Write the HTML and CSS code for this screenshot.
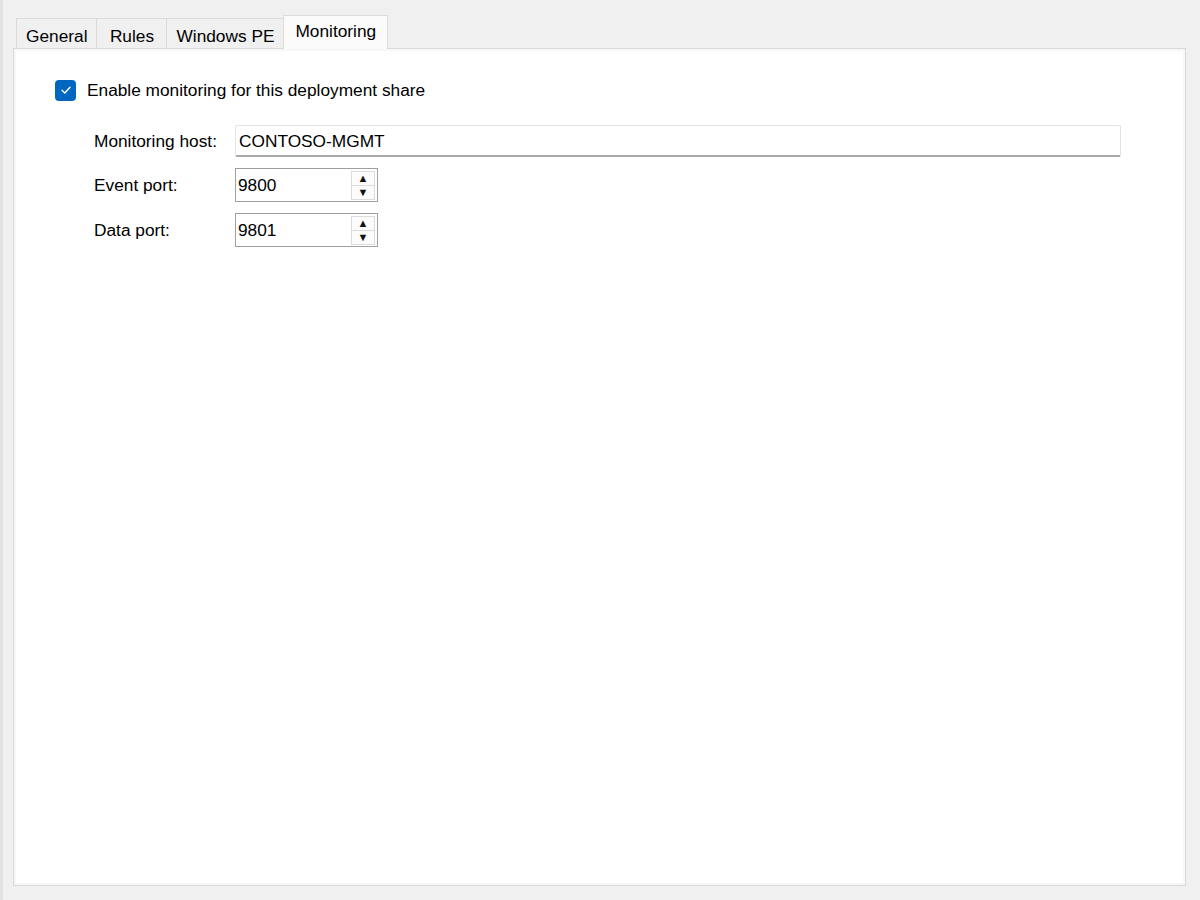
FILE: index.html
```html
<!DOCTYPE html>
<html>
<head>
    <title>Deployment Share Properties</title>
    <link rel="stylesheet" href="styles.css">
</head>
<body>
    <div class="window">
        <div class="tabs">
            <div class="tab">General</div>
            <div class="tab">Rules</div>
            <div class="tab">Windows PE</div>
            <div class="tab active">Monitoring</div>
        </div>
        <div class="panel">
            <label class="check-row">
                <span class="checkbox">
                    <svg width="12" height="12" viewBox="0 0 12 12"><path d="M2 6.3 L4.8 9 L10 3.2" fill="none" stroke="#fff" stroke-width="1.4" stroke-linecap="round" stroke-linejoin="round"/></svg>
                </span>
                <span>Enable monitoring for this deployment share</span>
            </label>

            <div class="form">
                <div class="form-row">
                    <span class="form-label">Monitoring host:</span>
                    <div class="text-input host">CONTOSO-MGMT</div>
                </div>
                <div class="form-row">
                    <span class="form-label">Event port:</span>
                    <div class="spin-input">
                        <span class="spin-value">9800</span>
                        <span class="spin-buttons">
                            <span class="spin-btn">&#9650;</span>
                            <span class="spin-btn">&#9660;</span>
                        </span>
                    </div>
                </div>
                <div class="form-row">
                    <span class="form-label">Data port:</span>
                    <div class="spin-input">
                        <span class="spin-value">9801</span>
                        <span class="spin-buttons">
                            <span class="spin-btn">&#9650;</span>
                            <span class="spin-btn">&#9660;</span>
                        </span>
                    </div>
                </div>
            </div>
        </div>
    </div>
</body>
</html>
```

FILE: styles.css
```css
html, body {
    margin: 0;
    height: 100%;
}

body {
    font-family: "Liberation Sans", Arial, sans-serif;
    font-size: 17.3px;
    color: #000;
    background-color: #f0f0f0;
    border-left: 3px solid #e2e2e2;
    box-sizing: border-box;
}

.window {
    padding: 15px 14px 0 10px;
}

.tabs {
    display: flex;
    align-items: flex-end;
    height: 33px;
    padding-left: 3px;
    position: relative;
    z-index: 1;
}

.tab {
    height: 30px;
    min-width: 71px;
    box-sizing: border-box;
    padding: 6px 9px 0 9px;
    border: 1px solid #dadada;
    border-bottom: none;
    margin-right: -1px;
    background-color: #f0f0f0;
    line-height: 22px;
    text-align: center;
}

.tab.active {
    height: 34px;
    margin-bottom: -1px;
    padding: 4px 11px 0 11px;
    background-color: #fbfbfb;
    border-color: #dcdcdc;
}

.panel {
    height: 838px;
    box-sizing: border-box;
    background-color: #fff;
    border: 1px solid #d9d9d9;
    box-shadow: inset 0 0 0 2px #f7f7f7;
    padding: 30px 0 0 41px;
}

.check-row {
    display: flex;
    align-items: center;
    gap: 11px;
    height: 22px;
}

.checkbox {
    width: 21px;
    height: 21px;
    border-radius: 4px;
    background-color: #0067c0;
    display: flex;
    align-items: center;
    justify-content: center;
}

.form {
    margin-top: 24px;
    padding-left: 39px;
    display: flex;
    flex-direction: column;
    gap: 11px;
}

.form-row {
    display: flex;
    align-items: center;
}

.form-label {
    width: 141px;
}

.text-input {
    height: 32px;
    box-sizing: border-box;
    padding: 4px 3px;
    line-height: 22px;
    border: 1px solid #e3e3e3;
    border-bottom: 2px solid #a8a8a8;
    border-radius: 2px;
    background-color: #fff;
}

.text-input.host {
    width: 886px;
}

.spin-input {
    width: 143px;
    height: 34px;
    box-sizing: border-box;
    border: 1px solid #a0a0a0;
    display: flex;
    align-items: stretch;
    background-color: #fff;
}

.spin-value {
    flex-grow: 1;
    padding: 5px 3px 0 2px;
    line-height: 22px;
}

.spin-buttons {
    width: 24px;
    margin: 2px 2px 2px 0;
    display: flex;
    flex-direction: column;
}

.spin-btn {
    flex: 1;
    border: 1px solid #dcdcdc;
    background-color: #fcfcfc;
    font-size: 11px;
    line-height: 13px;
    text-align: center;
    color: #111;
}

.spin-btn + .spin-btn {
    border-top: none;
}
```
